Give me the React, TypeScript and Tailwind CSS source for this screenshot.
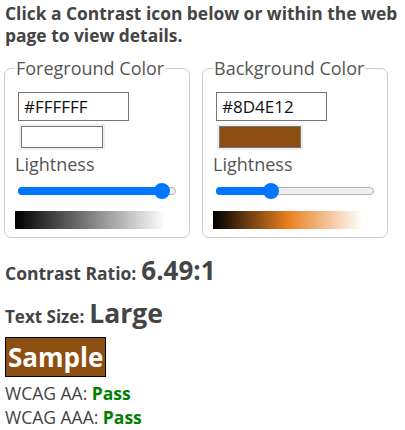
const text = 'text-[#444]';

function Swatch({ color }: { color: string }) {
  return (
    <div className="w-[86px] h-[26px] bg-[#efefef] p-[2px] mt-[3px] ml-[1px]">
      <div className="w-full h-full border border-[#767676]" style={{ background: color }} />
    </div>
  );
}

function Slider({ pct }: { pct: number }) {
  return (
    <div className="relative h-[16px] w-full mt-[7px]">
      <div className="absolute left-0 right-0 top-[4px] h-[8px] rounded-full bg-[#efefef] border border-[#b2b2b2]" />
      <div className="absolute left-0 top-[4px] h-[8px] rounded-full bg-[#0075ff]" style={{ width: `${pct}%` }} />
      <div
        className="absolute top-0 w-[16px] h-[16px] -ml-[8px] rounded-full bg-[#0075ff]"
        style={{ left: `${pct}%` }}
      />
    </div>
  );
}

function ColorBox({
  legend,
  hex,
  color,
  pct,
  gradient,
}: {
  legend: string;
  hex: string;
  color: string;
  pct: number;
  gradient: string;
}) {
  return (
    <fieldset className="w-[186px] border border-[#ccc] rounded-[7px] px-[10px] pb-[8px]">
      <legend className="px-[1px] text-[18px] leading-[24px] text-[#555]">{legend}</legend>
      <div className="pl-[3px] pt-[12px]">
        <div className="w-[111px] h-[29px] border border-[#767676] px-[5px] text-[17px] leading-[27px] text-[#111]">
          {hex}
        </div>
        <Swatch color={color} />
        <div className="text-[18px] leading-[24px] text-[#555] -ml-[3px] mt-[2px]">Lightness</div>
        <div className="w-[158px]">
          <Slider pct={pct} />
        </div>
      </div>
      <div className="w-[150px] h-[18px] mt-[12px]" style={{ background: gradient }} />
    </fieldset>
  );
}

export default function App() {
  return (
    <div className={`w-[405px] h-[430px] bg-white overflow-hidden font-['Open_Sans',sans-serif] ${text}`}>
      <div className="pl-[5px] pt-[2px] text-[17.4px] leading-[22px] font-bold">
        Click a Contrast icon below or within the web page to view details.
      </div>

      <div className="flex gap-[12px] pl-[4px] mt-[10px]">
        <ColorBox
          legend="Foreground Color"
          hex="#FFFFFF"
          color="#ffffff"
          pct={91}
          gradient="linear-gradient(to right, #000, #fff)"
        />
        <ColorBox
          legend="Background Color"
          hex="#8D4E12"
          color="#8D4E12"
          pct={35}
          gradient="linear-gradient(to right, #000, #e8801f 50%, #fff)"
        />
      </div>

      <div className="pl-[5px] mt-[15px]">
        <div className="flex items-baseline gap-[5px] leading-[34px]">
          <span className="text-[17.5px] font-bold">Contrast Ratio:</span>
          <span className="text-[26px] font-bold">6.49:1</span>
        </div>
        <div className="flex items-baseline gap-[5px] leading-[40px] mt-[3px]">
          <span className="text-[17px] font-bold">Text Size:</span>
          <span className="text-[26.5px] font-bold">Large</span>
        </div>
        <div className="inline-block bg-[#8D4E12] border border-black px-[2px] text-[26px] leading-[38px] font-bold text-white">
          Sample
        </div>
        <div className="text-[17.5px] leading-[24px] mt-[4px]">
          WCAG AA: <span className="font-bold text-[#008000]">Pass</span>
        </div>
        <div className="text-[17.5px] leading-[24px]">
          WCAG AAA: <span className="font-bold text-[#008000]">Pass</span>
        </div>
      </div>
    </div>
  );
}
